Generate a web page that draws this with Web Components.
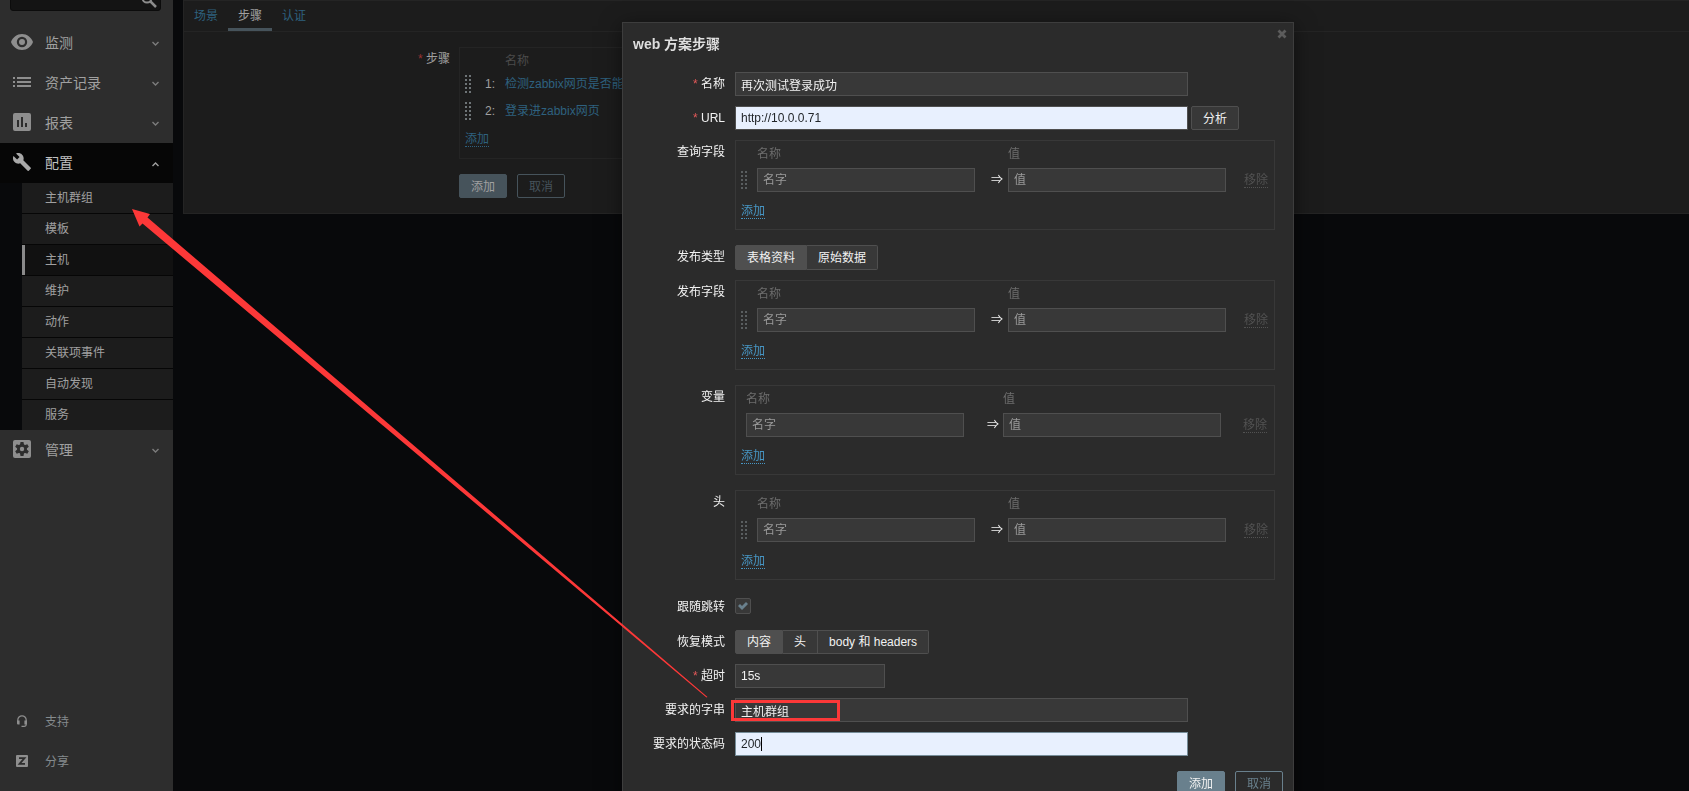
<!DOCTYPE html>
<html lang="zh-CN">
<head>
<meta charset="utf-8">
<title>web 方案步骤</title>
<style>
  html, body { height: 100%; }
  body {
    margin: 0;
    overflow: hidden;
    background: #08090b;
    color: #a0a0a0;
    font: 12px/14px "Liberation Sans", "Noto Sans CJK SC", sans-serif;
  }
</style>
</head>
<body>
<zabbix-app></zabbix-app>

<template id="t-app">
  <style>
    :host { display: flex; height: 100vh; overflow: hidden; }
    main { flex: 1; min-width: 0; padding-left: 10px; }
  </style>
  <app-sidebar></app-sidebar>
  <main><scenario-panel></scenario-panel></main>
  <dialog-overlay><step-dialog></step-dialog></dialog-overlay>
  <red-markup></red-markup>
</template>

<template id="t-sidebar">
  <style>
    :host { display: flex; flex-direction: column; flex: none; width: 173px; background: #2d2d2d; }
    form { display: flex; margin: -14px 12px 12px 10px; border: 1px solid #0c0c0c; border-radius: 3px; background: #141414; }
    input { flex: 1; min-width: 0; height: 23px; box-sizing: border-box; padding: 0 8px; border: 0; background: none; color: #a0a0a0; font: inherit; outline: none; }
    form button { width: 20px; padding: 2px 0 0; border: 0; background: none; color: #8c8c8c; }
    form svg { display: block; }
    nav.support { margin-top: auto; padding-bottom: 9px; }
  </style>
  <form role="search">
    <input type="text" aria-label="搜索">
    <button type="button" aria-label="搜索"><svg width="18" height="16" viewBox="0 0 18 16" fill="none" stroke="currentColor"><circle cx="7" cy="6" r="4.500" stroke-width="2"/><path d="M10 9l6 6" stroke-width="2.500"/></svg></button>
  </form>
  <nav>
    <nav-item icon="eye" text="监测"></nav-item>
    <nav-item icon="list" text="资产记录"></nav-item>
    <nav-item icon="report" text="报表"></nav-item>
    <nav-item icon="wrench" text="配置" open>
      <nav-subitem>主机群组</nav-subitem>
      <nav-subitem>模板</nav-subitem>
      <nav-subitem active>主机</nav-subitem>
      <nav-subitem>维护</nav-subitem>
      <nav-subitem>动作</nav-subitem>
      <nav-subitem>关联项事件</nav-subitem>
      <nav-subitem>自动发现</nav-subitem>
      <nav-subitem>服务</nav-subitem>
    </nav-item>
    <nav-item icon="gear" text="管理"></nav-item>
  </nav>
  <nav class="support">
    <nav-item icon="headset" text="支持" small></nav-item>
    <nav-item icon="zshare" text="分享" small></nav-item>
  </nav>
</template>

<template id="t-nav-item">
  <style>
    :host { display: block; }
    a { display: flex; align-items: center; box-sizing: border-box; height: 40px; padding: 0 14px 2px 0; color: #a0a0a0; font-size: 14px; text-decoration: none; }
    .icon { display: flex; justify-content: center; width: 44px; margin-right: 1px; color: #8e8e8e; }
    .text { flex: 1; padding-top: 1px; }
    .chevron { margin-top: 4px; color: #7c7c7c; }
    svg { display: block; }
    .sub { margin-left: 22px; }
    :host([open]) { background: #08090b; }
    :host([open]) a { background: #060606; color: #c0c0c0; }
    :host([open]) .icon { color: #a8a8a8; }
    :host([open]) .chevron { transform: rotate(180deg); color: #a0a0a0; }
    :host([small]) a { font-size: 12px; color: #858b8e; }
    :host([small]) .chevron { display: none; }
  </style>
  <a href="#"><span class="icon"></span><span class="text"></span><svg class="chevron" width="7" height="6" viewBox="0 0 7 6" fill="none" stroke="currentColor" stroke-width="1.400"><path d="M.5 1l3 3 3-3"/></svg></a>
  <div class="sub"><slot></slot></div>
</template>

<template id="t-nav-subitem">
  <style>
    :host { display: block; border-bottom: 1px solid #060606; background: #1c1c1c; }
    :host(:last-child) { border-bottom: 0; }
    a { display: flex; align-items: center; height: 30px; padding: 0 20px; border-left: 3px solid transparent; color: #a0a0a0; text-decoration: none; }
    :host([active]) a { border-left-color: #8a8a8a; background: #111111; }
  </style>
  <a href="#"><slot></slot></a>
</template>

<template id="t-drag">
  <style>
    :host { display: block; width: 6px; color: #5a5e60; }
    svg { display: block; }
  </style>
  <svg width="6" height="18" fill="currentColor"><path d="M0 0h2v2H0zM4 0h2v2H4zM0 4h2v2H0zM4 4h2v2H4zM0 8h2v2H0zM4 8h2v2H4zM0 12h2v2H0zM4 12h2v2H4zM0 16h2v2H0zM4 16h2v2H4z"/></svg>
</template>

<template id="t-button">
  <style>
    :host { display: inline-block; --bg: #69808d; --line: #69808d; --ink: #f2f2f2; }
    button { display: block; box-sizing: border-box; height: 24px; min-width: 48px; padding: 2px 11px 0; border: 1px solid var(--line); border-radius: 2px; background: var(--bg); color: var(--ink); font: inherit; }
    :host([kind="alt"]) { --bg: transparent; --ink: #69808d; }
    :host([kind="grey"]) { --bg: #383838; --line: #4f4f4f; }
    :host([dim]) { --bg: #46535b; --line: #46535b; --ink: #a0a0a0; }
    :host([dim][kind="alt"]) { --bg: transparent; --ink: #46535b; }
  </style>
  <button type="button"><slot></slot></button>
</template>

<template id="t-link">
  <style>
    :host { display: inline-block; color: #4796c4; }
    button { display: block; height: 15px; padding: 0; border: 0; border-bottom: 1px dotted currentColor; background: none; color: inherit; font: inherit; line-height: 14px; }
    :host([disabled]) { color: #525252; }
  </style>
  <button type="button"><slot></slot></button>
</template>

<template id="t-panel">
  <style>
    :host { display: block; box-sizing: border-box; border: solid #242424; border-width: 1px 0 1px 1px; background: #1c1c1c; }
    nav { display: flex; height: 30px; border-bottom: 1px solid #242424; }
    nav a { padding: 8px 10px 4px; color: #2e617f; text-decoration: none; line-height: 14px; border-bottom: 3px solid transparent; }
    nav a[aria-current] { color: #a0a0a0; border-color: #46535b; padding-bottom: 5px; }
    .body { display: grid; grid-template-columns: 266px minmax(0, 760px); column-gap: 9px; padding: 15px 10px 15px 0; }
    .name { padding-top: 5px; text-align: right; }
    .name::before { content: "* "; color: #993333; }
    .box { border: 1px solid #242424; }
    table { width: 100%; border-collapse: collapse; }
    th { height: 19px; padding: 3px 0 0 10px; text-align: left; font-weight: 400; color: #4b4b4b; }
    td { height: 27px; padding: 0 0 0 10px; }
    th:first-child, td:first-child { width: 6px; padding: 0 0 0 5px; }
    .num { width: 14px; text-align: right; }
    td a { color: #2e617f; text-decoration: none; }
    drag-handle { color: #6e7477; }
    link-button { margin: 8px 0 11px 5px; color: #2e617f; vertical-align: top; }
    .actions { grid-column: 2; display: flex; gap: 10px; padding-top: 15px; }
  </style>
  <nav><a href="#">场景</a><a href="#" aria-current="page">步骤</a><a href="#">认证</a></nav>
  <div class="body">
    <div class="name">步骤</div>
    <div class="box">
      <table>
        <thead><tr><th></th><th></th><th>名称</th></tr></thead>
        <tbody>
          <tr><td><drag-handle></drag-handle></td><td class="num">1:</td><td><a href="#">检测zabbix网页是否能</a></td></tr>
          <tr><td><drag-handle></drag-handle></td><td class="num">2:</td><td><a href="#">登录进zabbix网页</a></td></tr>
        </tbody>
      </table>
      <link-button>添加</link-button>
    </div>
    <div class="actions"><ui-button dim>添加</ui-button><ui-button dim kind="alt">取消</ui-button></div>
  </div>
</template>

<template id="t-overlay">
  <style>
    :host { position: fixed; inset: 0; display: flex; justify-content: center; align-items: flex-start; padding: 22px 0 0 227px; }
  </style>
  <slot></slot>
</template>

<template id="t-row">
  <style>
    :host { display: grid; grid-template-columns: 92px 1fr; column-gap: 10px; margin-bottom: 10px; }
    .label { padding-top: 5px; text-align: right; white-space: nowrap; }
    :host([required]) .label::before { content: "* "; color: #e45959; }
    .field { display: flex; gap: 3px; position: relative; min-height: 24px; }
    :host([group]) { margin-bottom: 15px; }
  </style>
  <div class="label"><slot name="label"></slot></div>
  <div class="field"><slot></slot></div>
</template>

<template id="t-pairs">
  <style>
    :host { display: block; flex: 1; border: 1px solid #383838; --lead: 21px; --name: 234px; --arrow: 17px; }
    :host([fixed]) { --lead: 10px; --name: 241px; --arrow: 16px; }
    table { width: 100%; border-collapse: collapse; table-layout: fixed; }
    th { height: 24px; padding: 1px 0 2px; text-align: left; font-weight: 400; color: #6c6c6c; }
    td { height: 24px; padding: 0; }
    .lead { width: var(--lead); }
    .name { width: var(--name); }
    .arrow { width: var(--arrow); }
    .value { width: 218px; }
    td.arrow { color: #f2f2f2; }
    td:last-child { padding-right: 6px; text-align: right; }
    :host([fixed]) td:last-child { padding-right: 7px; }
    drag-handle { margin-left: 5px; }
    :host([fixed]) drag-handle { display: none; }
    input { display: block; box-sizing: border-box; width: 218px; height: 24px; padding: 0 5px; border: 1px solid #4f4f4f; border-radius: 0; background: #383838; color: #f2f2f2; font: inherit; outline: none; }
    input::placeholder { color: #9a9a9a; opacity: 1; }
    link-button { vertical-align: middle; }
    .add { margin: 12px 0 10px 5px; vertical-align: top; }
  </style>
  <table>
    <thead><tr><th class="lead"></th><th class="name">名称</th><th class="arrow"></th><th class="value">值</th><th></th></tr></thead>
    <tbody><tr>
      <td><drag-handle></drag-handle></td>
      <td><input type="text" placeholder="名字" aria-label="名称"></td>
      <td class="arrow">⇒</td>
      <td><input type="text" placeholder="值" aria-label="值"></td>
      <td><link-button disabled>移除</link-button></td>
    </tr></tbody>
  </table>
  <link-button class="add">添加</link-button>
</template>

<template id="t-segments">
  <style>
    :host { display: flex; height: 24px; }
    :host([tall]) { height: 25px; }
    label { position: relative; display: flex; align-items: center; padding: 0 11px; border: 1px solid #4f4f4f; border-left-width: 0; background: #383838; color: #f2f2f2; }
    label:first-of-type { border-left-width: 1px; border-radius: 2px 0 0 2px; }
    label:last-of-type { border-radius: 0 2px 2px 0; }
    label:has(:checked) { background: #4f4f4f; }
    input { position: absolute; inset: 0; margin: 0; opacity: 0; }
  </style>
</template>

<template id="t-dialog">
  <style>
    :host { display: block; box-sizing: border-box; width: 672px; padding: 0 10px 10px; border: 1px solid #3d3d3d; background: #2b2b2b; color: #f2f2f2; box-shadow: 0 4px 20px rgba(0,0,0,.5); }
    header { display: flex; justify-content: space-between; height: 49px; }
    h4 { margin: 0; padding-top: 12px; font-size: 14px; line-height: 18px; font-weight: 700; color: #dedede; }
    header button { height: 10px; margin: 6px -4px 0 0; padding: 0; border: 0; background: none; color: #5c5c5c; }
    svg { display: block; }
    section { padding-right: 8px; }
    label, .caption { color: #f2f2f2; }
    .text { box-sizing: border-box; width: 453px; height: 24px; padding: 0 5px; border: 1px solid #4f4f4f; border-radius: 0; background: #383838; color: #f2f2f2; font: inherit; outline: none; }
    .short { width: 150px; }
    .filled { background: #e8f0fe; color: #22262a; }
    .current { border-color: #768d99; caret-color: transparent; }
    .caret { position: absolute; left: 26px; top: 5px; width: 1px; height: 14px; background: #000; }
    .check { appearance: none; box-sizing: border-box; width: 16px; height: 16px; margin: 3px 0 6px; border: 1px solid #4f4f4f; border-radius: 2px; background: #383838; }
    .check:checked::before { content: ""; display: block; width: 14px; height: 14px; background: #69808d; clip-path: polygon(2px 7px, 4px 5px, 6px 7px, 10px 3px, 12px 5px, 6px 11px); }
    footer { display: flex; justify-content: flex-end; gap: 10px; padding-top: 5px; }
  </style>
  <header>
    <h4>web 方案步骤</h4>
    <button type="button" aria-label="关闭"><svg width="10" height="10" viewBox="0 0 10 10" stroke="currentColor" stroke-width="2.800"><path d="M1.500 1.500l7 7M8.500 1.500l-7 7"/></svg></button>
  </header>
  <section>
    <form-row required><label slot="label" for="name">名称</label><input class="text" id="name" type="text" value="再次测试登录成功"></form-row>
    <form-row required><label slot="label" for="url">URL</label><input class="text filled" id="url" type="text" value="http://10.0.0.71"><ui-button kind="grey">分析</ui-button></form-row>
    <form-row group><span class="caption" slot="label">查询字段</span><pair-table></pair-table></form-row>
    <form-row><span class="caption" slot="label">发布类型</span><segment-control tall name="type" options="表格资料|原始数据"></segment-control></form-row>
    <form-row group><span class="caption" slot="label">发布字段</span><pair-table></pair-table></form-row>
    <form-row group><span class="caption" slot="label">变量</span><pair-table fixed></pair-table></form-row>
    <form-row group><span class="caption" slot="label">头</span><pair-table></pair-table></form-row>
    <form-row><label slot="label" for="follow">跟随跳转</label><input class="check" id="follow" type="checkbox" checked></form-row>
    <form-row><span class="caption" slot="label">恢复模式</span><segment-control name="mode" options="内容|头|body 和 headers"></segment-control></form-row>
    <form-row required><label slot="label" for="timeout">超时</label><input class="text short" id="timeout" type="text" value="15s"></form-row>
    <form-row><label slot="label" for="string">要求的字串</label><input class="text" id="string" type="text" value="主机群组"></form-row>
    <form-row><label slot="label" for="codes">要求的状态码</label><input class="text filled current" id="codes" type="text" value="200"><span class="caret"></span></form-row>
  </section>
  <footer><ui-button>添加</ui-button><ui-button kind="alt">取消</ui-button></footer>
</template>

<template id="t-markup">
  <style>
    :host { position: fixed; inset: 0; pointer-events: none; }
    svg { display: block; width: 100%; height: 100%; }
  </style>
  <svg aria-hidden="true">
    <path fill="#fc3838" d="M132 209L150 214L147.500 217.500L707.500 697L706.500 697.500L142.500 223.500L139.500 226.500Z"/>
    <rect x="732.500" y="701.500" width="106" height="18" fill="none" stroke="#fc3838" stroke-width="3"/>
  </svg>
</template>

<script>
  const define = (tag, id, setup) => customElements.define(tag, class extends HTMLElement {
    constructor() {
      super();
      this.attachShadow({ mode: 'open' }).append(document.getElementById(id).content.cloneNode(true));
    }
    connectedCallback() { if (setup) setup(this, this.shadowRoot); }
  });

  const icons = {
    eye: '<svg width="22" height="16" viewBox="0 0 22 16"><path fill="currentColor" fill-rule="evenodd" d="M11 0C6 0 1.700 3.300 0 8c1.700 4.700 6 8 11 8s9.300-3.300 11-8c-1.700-4.700-6-8-11-8zm0 13.200a5.200 5.200 0 1 1 0-10.400 5.200 5.200 0 0 1 0 10.400zm0-2.200a3 3 0 1 0 0-6 3 3 0 0 0 0 6z"/></svg>',
    list: '<svg width="18" height="10" viewBox="0 0 18 10" fill="currentColor"><path d="M0 0h2v2H0zM4 0h14v2H4zM0 4h2v2H0zM4 4h14v2H4zM0 8h2v2H0zM4 8h14v2H4z"/></svg>',
    report: '<svg width="18" height="18" viewBox="0 0 18 18"><path fill="currentColor" fill-rule="evenodd" d="M2 0h14a2 2 0 0 1 2 2v14a2 2 0 0 1-2 2H2a2 2 0 0 1-2-2V2a2 2 0 0 1 2-2zM4 7v7h2V7zM8 4v10h2V4zM12 10v4h2v-4z"/></svg>',
    wrench: '<svg width="18" height="18" viewBox="1 1 22 22"><path fill="currentColor" d="M22.700 19l-9.100-9.100c.9-2.300.4-5-1.500-6.900-2-2-5-2.400-7.400-1.300L9 6 6 9 1.600 4.700C.4 7.100.9 10.100 2.900 12.100c1.900 1.900 4.600 2.400 6.900 1.500l9.100 9.100c.4.4 1 .4 1.400 0l2.300-2.300c.5-.4.5-1.100.1-1.400z"/></svg>',
    gear: '<svg width="18" height="18" viewBox="0 0 18 18"><rect width="18" height="18" rx="2" fill="currentColor"/><g fill="#2d2d2d"><circle cx="9" cy="9" r="5"/><path d="M7.500 2h3l.5 3H7zM7.500 16h3l.5-3H7z"/><path transform="rotate(60 9 9)" d="M7.500 2h3l.5 3H7zM7.500 16h3l.5-3H7z"/><path transform="rotate(120 9 9)" d="M7.500 2h3l.5 3H7zM7.500 16h3l.5-3H7z"/></g><circle cx="9" cy="9" r="2.200" fill="currentColor"/></svg>',
    headset: '<svg width="12" height="12" viewBox="0 0 12 12"><path d="M1.800 7V5a4.200 4.200 0 0 1 8.400 0v4.500Q10.200 11.300 8 11.300H5.500" fill="none" stroke="currentColor" stroke-width="1.200"/><path d="M1 5.500h2.600v4H2a1 1 0 0 1-1-1zM8.400 5.500H11v3a1 1 0 0 1-1 1H8.400z" fill="currentColor"/></svg>',
    zshare: '<svg width="12" height="12" viewBox="0 0 12 12"><rect width="12" height="12" rx="1" fill="currentColor"/><path d="M3 3.200h5.500L3.600 8.800H9" fill="none" stroke="#2d2d2d" stroke-width="1.800"/></svg>'
  };

  define('red-markup', 't-markup');
  define('drag-handle', 't-drag');
  define('ui-button', 't-button');
  define('link-button', 't-link', (host, root) => {
    root.querySelector('button').disabled = host.hasAttribute('disabled');
  });
  define('nav-subitem', 't-nav-subitem');
  define('nav-item', 't-nav-item', (host, root) => {
    root.querySelector('.icon').innerHTML = icons[host.getAttribute('icon')];
    root.querySelector('.text').textContent = host.getAttribute('text');
  });
  define('segment-control', 't-segments', (host, root) => {
    host.getAttribute('options').split('|').forEach((text, i) => {
      const label = document.createElement('label');
      const input = document.createElement('input');
      input.type = 'radio';
      input.name = host.getAttribute('name');
      input.checked = i === 0;
      label.append(input, text);
      root.append(label);
    });
  });
  define('pair-table', 't-pairs');
  define('form-row', 't-row');
  define('step-dialog', 't-dialog');
  define('dialog-overlay', 't-overlay');
  define('scenario-panel', 't-panel');
  define('app-sidebar', 't-sidebar');
  define('zabbix-app', 't-app');
</script>
</body>
</html>
